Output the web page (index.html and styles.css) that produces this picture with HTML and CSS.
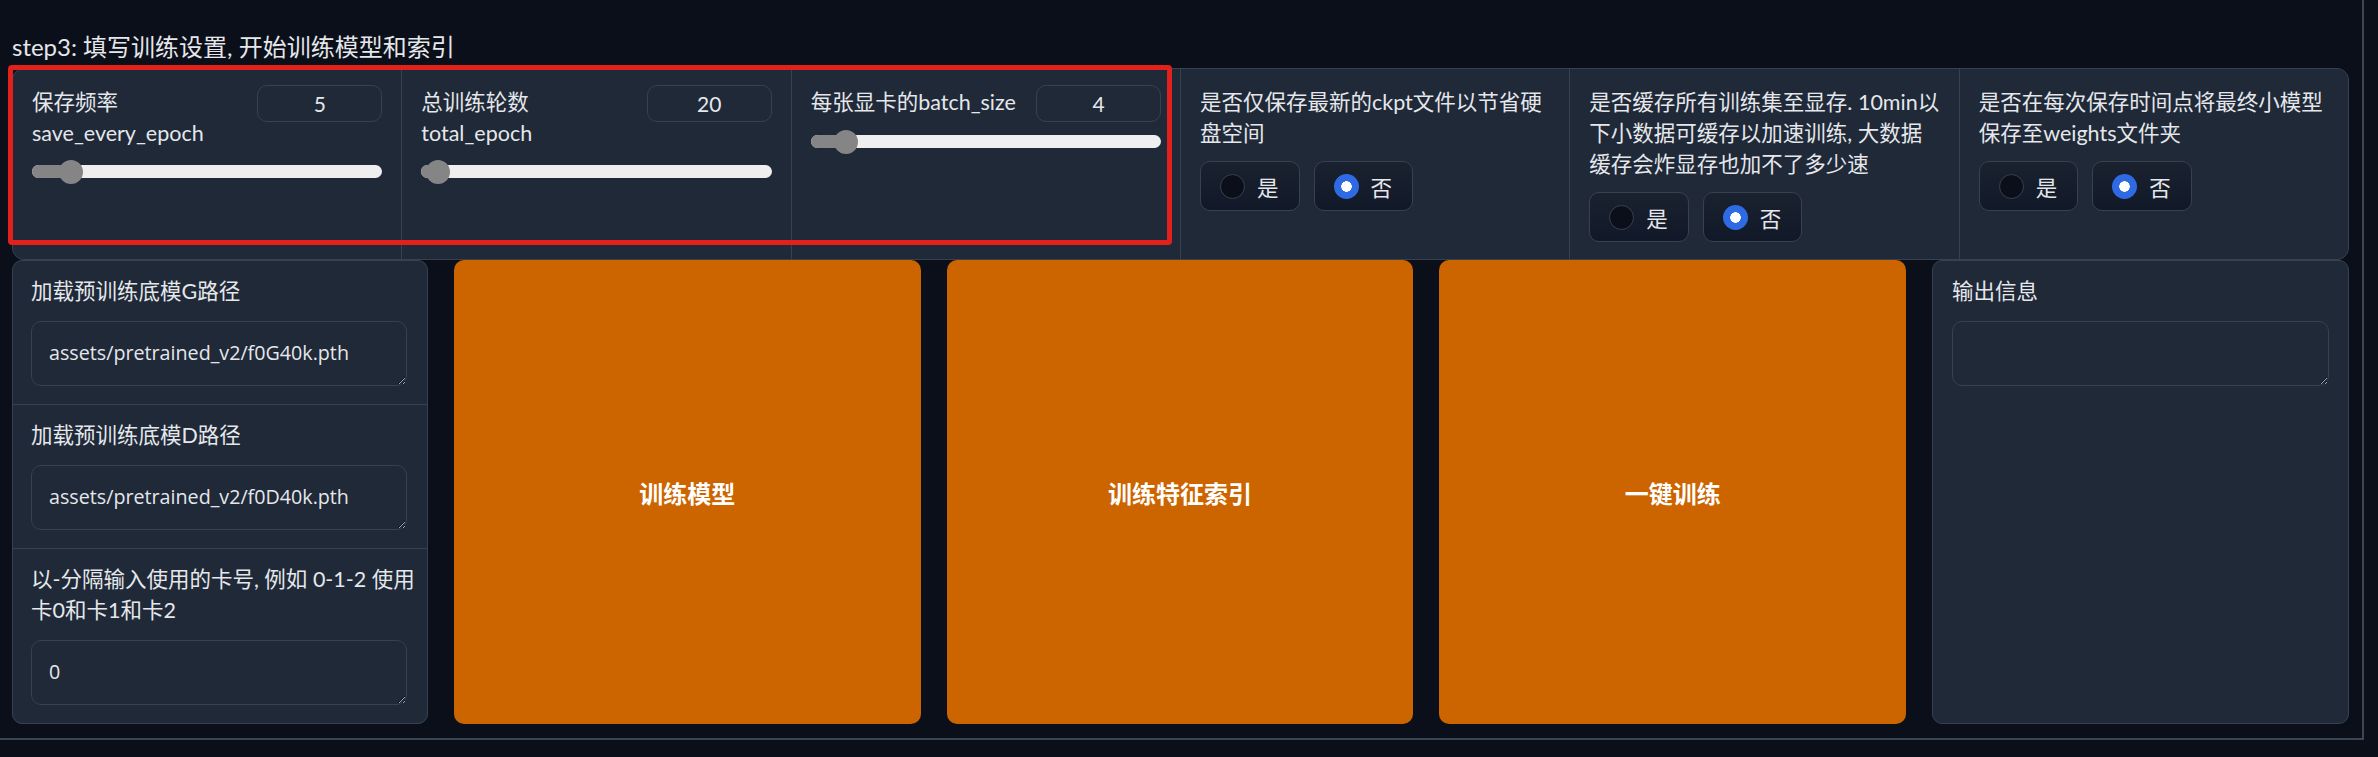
FILE: index.html
```html
<!DOCTYPE html>
<html lang="zh-CN">
<head>
<meta charset="utf-8">
<title>step3</title>
<link rel="stylesheet" href="styles.css">
</head>
<body>
<div class="tab">
  <div class="title">step3: 填写训练设置, 开始训练模型和索引</div>
  <div class="settings">
    <div class="cell">
      <div class="head">
        <div class="labels"><div class="lbl">保存频率</div><div class="info">save_every_epoch</div></div>
        <div class="num">5</div>
      </div>
      <div class="slider" style="--p:0.083"><div class="fill"></div><div class="thumb"></div></div>
    </div>
    <div class="cell">
      <div class="head">
        <div class="labels"><div class="lbl">总训练轮数</div><div class="info">total_epoch</div></div>
        <div class="num">20</div>
      </div>
      <div class="slider" style="--p:0.014"><div class="fill"></div><div class="thumb"></div></div>
    </div>
    <div class="cell">
      <div class="head">
        <div class="labels"><div class="lbl">每张显卡的batch_size</div></div>
        <div class="num">4</div>
      </div>
      <div class="slider" style="--p:0.072"><div class="fill"></div><div class="thumb"></div></div>
    </div>
    <div class="cell">
      <div class="lbl">是否仅保存最新的ckpt文件以节省硬<br>盘空间</div>
      <div class="radios">
        <div class="radio"><span class="dot"></span><span>是</span></div>
        <div class="radio"><span class="dot on"></span><span>否</span></div>
      </div>
    </div>
    <div class="cell">
      <div class="lbl">是否缓存所有训练集至显存. 10min以<br>下小数据可缓存以加速训练, 大数据<br>缓存会炸显存也加不了多少速</div>
      <div class="radios">
        <div class="radio"><span class="dot"></span><span>是</span></div>
        <div class="radio"><span class="dot on"></span><span>否</span></div>
      </div>
    </div>
    <div class="cell">
      <div class="lbl">是否在每次保存时间点将最终小模型<br>保存至weights文件夹</div>
      <div class="radios">
        <div class="radio"><span class="dot"></span><span>是</span></div>
        <div class="radio"><span class="dot on"></span><span>否</span></div>
      </div>
    </div>
  </div>
  <div class="bottom">
    <div class="side">
      <div class="block">
        <div class="blbl">加载预训练底模G路径</div>
        <textarea class="ta" readonly>assets/pretrained_v2/f0G40k.pth</textarea>
      </div>
      <div class="block">
        <div class="blbl">加载预训练底模D路径</div>
        <textarea class="ta" readonly>assets/pretrained_v2/f0D40k.pth</textarea>
      </div>
      <div class="block">
        <div class="blbl">以-分隔输入使用的卡号, 例如 0-1-2 使用<br>卡0和卡1和卡2</div>
        <textarea class="ta" readonly>0</textarea>
      </div>
    </div>
    <button class="btn">训练模型</button>
    <button class="btn">训练特征索引</button>
    <button class="btn">一键训练</button>
    <div class="output">
      <div class="blbl">输出信息</div>
      <textarea class="ta" readonly></textarea>
    </div>
  </div>
  <div class="mark"></div>
</div>
</body>
</html>
```

FILE: styles.css
```css
html, body {
  margin: 0;
  padding: 0;
  background: #0b0f19;
  color-scheme: dark;
}
body {
  font-family: "Lato", "Noto Sans CJK SC", sans-serif;
  color: #e5e7eb;
  font-size: 21.5px;
}
.tab {
  position: relative;
  width: 2364px;
  box-sizing: border-box;
  padding: 32px 13px 14px 12px;
  border-right: 2px solid #3b4556;
  border-bottom: 2px solid #3b4556;
}
.title {
  font-size: 24px;
  line-height: 30px;
  margin-bottom: 6px;
  color: #e5e7eb;
}
.settings {
  display: grid;
  grid-template-columns: repeat(6, 1fr);
  gap: 1px;
  background: #374151;
  border: 1px solid #374151;
  border-radius: 12px;
  overflow: hidden;
}
.cell {
  background: #1f2937;
  padding: 16px 19px 17px 19px;
  min-width: 0;
}
.head {
  display: flex;
  justify-content: space-between;
  align-items: flex-start;
}
.lbl {
  line-height: 31px;
  padding-top: 2px;
  white-space: nowrap;
}
.blbl {
  line-height: 31px;
  white-space: nowrap;
}
.info {
  line-height: 31px;
  padding-bottom: 3px;
}
.num {
  width: 125px;
  height: 37px;
  box-sizing: border-box;
  border: 1px solid #374151;
  border-radius: 10px;
  display: flex;
  align-items: center;
  justify-content: center;
  font-size: 21px;
}
.slider {
  position: relative;
  height: 24px;
  margin-top: 8px;
}
.slider::before {
  content: "";
  position: absolute;
  left: 0;
  right: 0;
  top: 5px;
  height: 13px;
  border-radius: 7px;
  background: #efefef;
}
.fill {
  position: absolute;
  left: 0;
  top: 5px;
  height: 13px;
  width: calc(12px + (100% - 24px) * var(--p));
  border-radius: 7px 0 0 7px;
  background: #858585;
}
.thumb {
  position: absolute;
  top: 0;
  left: calc((100% - 24px) * var(--p));
  width: 24px;
  height: 24px;
  border-radius: 50%;
  background: #858585;
}
.radios {
  display: flex;
  gap: 14px;
  margin-top: 12px;
}
.radio {
  display: inline-flex;
  align-items: center;
  gap: 12px;
  height: 50px;
  box-sizing: border-box;
  padding: 0 20px 0 19px;
  border: 1px solid #374151;
  border-radius: 10px;
  background: linear-gradient(to bottom, #1a2230, #111827);
}
.dot {
  width: 25px;
  height: 25px;
  box-sizing: border-box;
  border-radius: 50%;
  border: 1px solid #374151;
  background: #0b0f19;
}
.dot.on {
  border: none;
  background: radial-gradient(circle, #ffffff 0 5px, #2d6ae3 5.5px);
}
.bottom {
  display: flex;
  gap: 26px;
  align-items: stretch;
}
.side {
  width: 416px;
  box-sizing: border-box;
  flex: none;
  display: flex;
  flex-direction: column;
  gap: 1px;
  background: #374151;
  border: 1px solid #374151;
  border-radius: 10px;
  overflow: hidden;
}
.block {
  background: #1f2937;
  padding: 15px 20px 18px 18px;
}
.ta {
  display: block;
  width: 100%;
  height: 65px;
  box-sizing: border-box;
  margin: 14px 0 0 0;
  padding: 17px 17px;
  border: 1px solid #374151;
  border-radius: 10px;
  background: #1f2937;
  color: #e5e7eb;
  font-family: "Open Sans", "Noto Sans CJK SC", sans-serif;
  font-size: 19.7px;
  line-height: 28px;
  resize: vertical;
  outline: none;
  overflow: hidden;
}
.btn {
  flex: 1;
  min-width: 0;
  border: none;
  border-radius: 10px;
  background: #cc6500;
  color: #ffffff;
  font-family: "Lato", "Noto Sans CJK SC", sans-serif;
  font-size: 24px;
  font-weight: 700;
  padding: 0;
}
.output {
  width: 417px;
  flex: none;
  box-sizing: border-box;
  background: #1f2937;
  border: 1px solid #374151;
  border-radius: 10px;
  padding: 15px 19px 17px 19px;
}
.mark {
  position: absolute;
  left: 8px;
  top: 65px;
  width: 1164px;
  height: 180px;
  box-sizing: border-box;
  border: 5px solid #e3211c;
  border-radius: 4px;
  pointer-events: none;
}
```
